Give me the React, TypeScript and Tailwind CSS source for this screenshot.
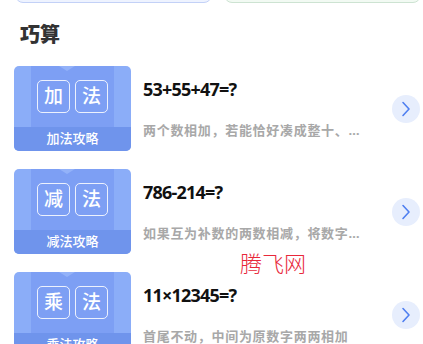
import React from "react";

const items = [
  { a: "加", b: "法", label: "加法攻略", title: "53+55+47=?", desc: "两个数相加，若能恰好凑成整十、…" },
  { a: "减", b: "法", label: "减法攻略", title: "786-214=?", desc: "如果互为补数的两数相减，将数字…" },
  { a: "乘", b: "法", label: "乘法攻略", title: "11×12345=?", desc: "首尾不动，中间为原数字两两相加" },
];

function Cover({ a, b, label }: { a: string; b: string; label: string }) {
  return (
    <div className="relative w-[117px] h-[85px] shrink-0 rounded-[5px] overflow-hidden bg-[#8badf8] flex flex-col">
      <div className="flex-1 mx-[17px] bg-[#7d9ff4] flex items-center justify-center gap-[5px] relative">
        <div className="absolute top-0 left-[28px] w-0 h-0 border-l-[8px] border-r-[8px] border-t-[5px] border-l-transparent border-r-transparent border-t-[#93b2f9]" />
        <div className="w-[33px] h-[33px] rounded-[5px] border-[1.5px] border-white/85 flex items-center justify-center text-white text-[19px] font-medium">{a}</div>
        <div className="w-[33px] h-[33px] rounded-[5px] border-[1.5px] border-white/85 flex items-center justify-center text-white text-[19px] font-medium">{b}</div>
      </div>
      <div className="h-[24px] bg-[#6f94ec] flex items-center justify-center text-white text-[13px] font-medium">{label}</div>
    </div>
  );
}

export default function App() {
  return (
    <div className="relative w-[423px] h-[344px] overflow-hidden bg-white" style={{ fontFamily: '"Noto Sans", "Noto Sans CJK SC", sans-serif' }}>
      <div className="flex gap-[12px] pl-[15px] pr-[2px] -mt-[40px] h-[43px]">
        <div className="flex-1 rounded-[8px] border-[1.5px] border-[#c3d1f7] bg-[#eef3ff]" />
        <div className="flex-1 rounded-[8px] border-[1.5px] border-[#cde3d2] bg-[#f2faf3]" />
      </div>
      <div className="pl-[20px] pt-[20px] pb-[20px] text-[20px] font-black text-[#333] leading-[24px]">巧算</div>
      <div className="flex flex-col gap-[18px] pl-[14px] pr-[3px] -mt-[1px]">
        {items.map((it) => (
          <div key={it.label} className="flex items-start h-[85px]">
            <Cover a={it.a} b={it.b} label={it.label} />
            <div className="flex-1 pl-[12px] pt-[12px]">
              <div className="text-[18px] font-bold text-[#111] leading-[22px] tracking-[-0.8px]">{it.title}</div>
              <div className="mt-[21px] text-[13px] font-bold text-[#a8a8a8] leading-[18px] tracking-[0.7px]">{it.desc}</div>
            </div>
            <div className="self-center w-[28px] h-[28px] rounded-full bg-[#e7eefd] flex items-center justify-center">
              <svg width="10" height="18" viewBox="0 0 10 18" fill="none">
                <path d="M2 2.5 L8 9 L2 15.5" stroke="#4f7ff0" strokeWidth="1.6" strokeLinecap="round" strokeLinejoin="round" />
              </svg>
            </div>
          </div>
        ))}
      </div>
      <div className="absolute left-[240px] top-[248px] text-[22px] text-[#e8283a] leading-[28px] font-light" style={{ fontFamily: '"Noto Sans CJK SC", sans-serif' }}>腾飞网</div>
    </div>
  );
}
